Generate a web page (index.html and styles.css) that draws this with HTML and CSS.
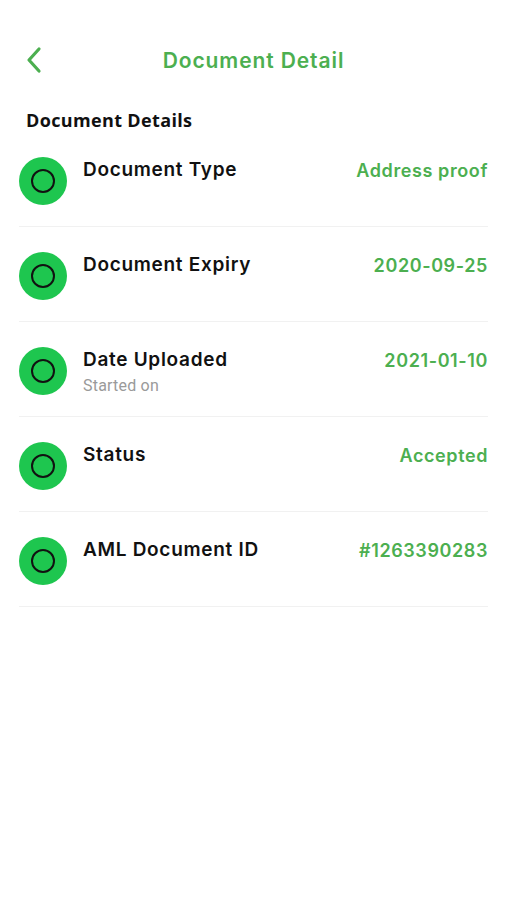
FILE: index.html
```html
<!DOCTYPE html>
<html lang="en">
<head>
<meta charset="utf-8">
<title>Document Detail</title>
<link rel="stylesheet" href="styles.css">
</head>
<body>
<div class="screen">
  <header class="topbar">
    <button class="back" aria-label="Back">
      <svg width="18" height="28" viewBox="0 0 18 28"><path d="M14 3 L4 14 L14 25" fill="none" stroke="#4caf50" stroke-width="3.2" stroke-linecap="round" stroke-linejoin="round"/></svg>
    </button>
    <h1 class="title">Document Detail</h1>
  </header>
  <h2 class="section">Document Details</h2>
  <ul class="list">
    <li class="row">
      <span class="dot"><span class="ring"></span></span>
      <div class="text"><div class="label">Document Type</div></div>
      <div class="value">Address proof</div>
    </li>
    <li class="row">
      <span class="dot"><span class="ring"></span></span>
      <div class="text"><div class="label">Document Expiry</div></div>
      <div class="value">2020-09-25</div>
    </li>
    <li class="row">
      <span class="dot"><span class="ring"></span></span>
      <div class="text"><div class="label">Date Uploaded</div><div class="sub">Started on</div></div>
      <div class="value">2021-01-10</div>
    </li>
    <li class="row">
      <span class="dot"><span class="ring"></span></span>
      <div class="text"><div class="label">Status</div></div>
      <div class="value">Accepted</div>
    </li>
    <li class="row">
      <span class="dot"><span class="ring"></span></span>
      <div class="text"><div class="label">AML Document ID</div></div>
      <div class="value">#1263390283</div>
    </li>
  </ul>
</div>
</body>
</html>
```
FILE: styles.css
```css
html, body {
  margin: 0;
  padding: 0;
  background: #ffffff;
}
body {
  font-family: Inter, "Noto Sans", sans-serif;
  color: #111111;
}
.screen {
  width: 507px;
  min-height: 900px;
  box-sizing: border-box;
}
.topbar {
  position: relative;
  height: 72px;
  padding-top: 47px;
  box-sizing: border-box;
  display: flex;
  justify-content: center;
}
.back {
  position: absolute;
  left: 25px;
  top: 46px;
  border: 0;
  background: none;
  padding: 0;
  width: 18px;
  height: 28px;
}
.back svg { display: block; }
.title {
  margin: 0;
  font-size: 21px;
  line-height: 28px;
  font-weight: 600;
  color: #4caf50;
  letter-spacing: 0.9px;
}
.section {
  margin: 36px 0 0 26px;
  font-family: "Open Sans", sans-serif;
  font-size: 18px;
  line-height: 24px;
  font-weight: 700;
  letter-spacing: 0.35px;
  color: #111;
}
.list {
  list-style: none;
  margin: 0;
  padding: 0 19px;
}
.row {
  display: flex;
  align-items: flex-start;
  padding: 25px 0 21px;
  border-bottom: 1px solid #f1f1f1;
}
.dot {
  width: 48px;
  height: 48px;
  border-radius: 50%;
  background: #1ec64f;
  display: flex;
  align-items: center;
  justify-content: center;
  flex: none;
}
.ring {
  width: 20px;
  height: 20px;
  border-radius: 50%;
  border: 2px solid #111;
}
.text {
  flex: 1;
  margin-left: 16px;
}
.label {
  font-size: 19px;
  line-height: 26px;
  font-weight: 600;
  letter-spacing: 0.7px;
  color: #111;
}
.sub {
  font-family: Roboto, sans-serif;
  font-size: 16px;
  line-height: 18px;
  letter-spacing: 0.2px;
  color: #9a9a9a;
  margin-top: 4px;
}
.value {
  font-size: 18px;
  line-height: 26px;
  font-weight: 600;
  letter-spacing: 0.6px;
  color: #4caf50;
  text-align: right;
  margin-top: 1px;
}
```
